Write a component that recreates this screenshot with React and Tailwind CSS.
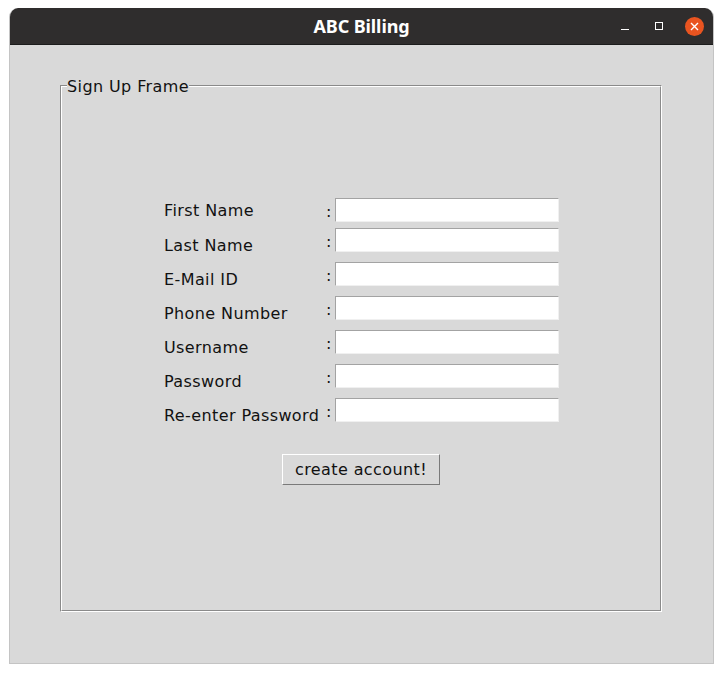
const fields = [
  { label: "First Name", first: true },
  { label: "Last Name" },
  { label: "E-Mail ID" },
  { label: "Phone Number" },
  { label: "Username" },
  { label: "Password" },
  { label: "Re-enter Password" },
];

export default function App() {
  return (
    <div className="w-[722px] h-[673px] bg-white pt-[8px] pl-[9px]">
      <div className="w-[705px] h-[656px] flex flex-col rounded-t-[9px] overflow-hidden border-x border-b border-[#c4c4c4]">
        <div className="relative h-[37px] shrink-0 bg-[#2f2d2d] border-b border-[#1c1c1c] flex items-center justify-center">
          <span className="text-white font-bold text-[18px] font-['Noto_Sans',sans-serif] tracking-[-0.1px]">
            ABC Billing
          </span>
          <div className="absolute right-[9px] top-0 h-full flex items-center">
            <div className="w-[8px] h-px bg-white mr-[26px] mt-[6px]" />
            <div className="w-[8px] h-[8px] border border-white mr-[22px]" />
            <div className="w-[19px] h-[19px] rounded-full bg-[#e95420] flex items-center justify-center">
              <svg width="9" height="9" viewBox="0 0 9 9">
                <path d="M1 1L8 8M8 1L1 8" stroke="white" strokeWidth="1.4" />
              </svg>
            </div>
          </div>
        </div>
        <div className="flex-1 bg-[#d9d9d9] pt-[40px] pl-[50px] font-['DejaVu_Sans',sans-serif] text-[16px] tracking-[0.4px] text-[#111]">
          <div className="relative w-[602px] h-[527px] border border-t-[#8a8a8a] border-l-[#8a8a8a] border-b-white border-r-white">
            <div className="w-full h-full border border-t-white border-l-white border-b-[#8a8a8a] border-r-[#8a8a8a]">
              <span className="absolute -top-[9px] left-[6px] bg-[#d9d9d9] leading-[20px]">
                Sign Up Frame
              </span>
              <div className="pt-[107px] pl-[102px]">
                {fields.map((f) => (
                  <div key={f.label} className="flex h-[34px]">
                    <div className={`w-[162px] leading-[34px] whitespace-nowrap ${f.first ? "pt-0" : "pt-[1px]"}`}>
                      {f.label}
                    </div>
                    <div className={`flex items-start ${f.first ? "mt-[4px]" : "mt-0"}`}>
                      <span className="w-[9px] h-[23px] leading-[23px] mt-[2px]">:</span>
                      <div className="w-[224px] h-[24px] bg-white border border-t-[#a3a3a3] border-l-[#a3a3a3] border-b-[#f0f0f0] border-r-[#f0f0f0]" />
                    </div>
                  </div>
                ))}
                <div className="pl-[118px] pt-[22px]">
                  <button className="w-[158px] h-[31px] bg-[#d9d9d9] border border-t-white border-l-white border-b-[#7a7a7a] border-r-[#7a7a7a] text-[16px] tracking-[0.4px] text-[#111]">
                    create account!
                  </button>
                </div>
              </div>
            </div>
          </div>
        </div>
      </div>
    </div>
  );
}
